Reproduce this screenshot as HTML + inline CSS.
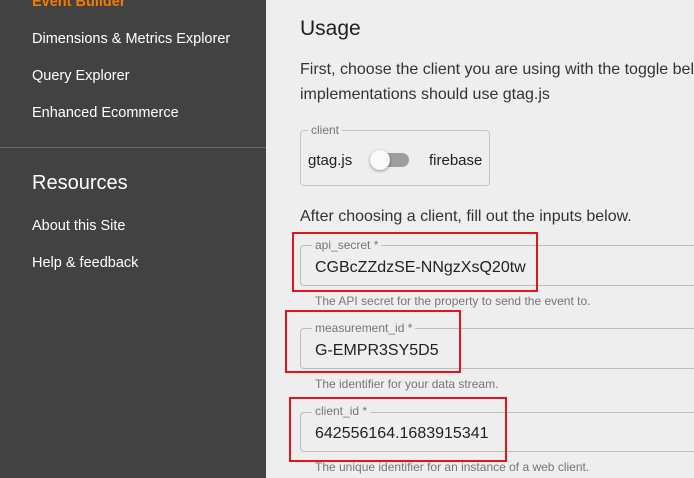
<!DOCTYPE html>
<html><head><style>
*{margin:0;padding:0;box-sizing:border-box}
html,body{width:694px;height:478px;overflow:hidden}
body{background:#eeeeee;font-family:"Liberation Sans",sans-serif;position:relative}
.wrap{position:absolute;left:0;top:0;width:694px;height:478px;overflow:hidden}
.side{position:absolute;left:0;top:0;width:266px;height:478px;background:#424242;color:#fff}
.side div{position:absolute;left:32px;font-size:14.5px;white-space:nowrap}
.a{position:absolute;white-space:nowrap}
.box{position:absolute;border:1px solid #bdbdbd;border-radius:4px;border-right:none;border-top-right-radius:0;border-bottom-right-radius:0}
.lbl{position:absolute;background:#eeeeee;color:#757575;font-size:12px;padding:0 3px;line-height:12px}
.val{position:absolute;font-size:16px;color:#212121}
.help{position:absolute;font-size:12px;color:#757575;white-space:nowrap}
.red{position:absolute;border:2px solid #e3141c}
</style></head><body><div class="wrap">
<div class="side">
<div style="top:-6px;color:#f57c00;font-weight:bold">Event Builder</div>
<div style="top:31px">Dimensions &amp; Metrics Explorer</div>
<div style="top:68px">Query Explorer</div>
<div style="top:105px">Enhanced Ecommerce</div>
<div style="top:147px;left:0;width:266px;height:1px;background:#6a6a6a"></div>
<div style="top:172px;font-size:20px">Resources</div>
<div style="top:218px">About this Site</div>
<div style="top:255px">Help &amp; feedback</div>
</div>
<div class="a" style="left:300px;top:17px;font-size:21px;color:#212121">Usage</div>
<div class="a" style="left:300px;top:57px;font-size:16px;color:#333;line-height:25px;width:394px;overflow:hidden">First, choose the client you are using with the toggle below. Non-mobile<br>implementations should use gtag.js</div>
<div style="position:absolute;left:300px;top:130px;width:190px;height:56px;border:1px solid #c4c4c4;border-radius:4px"></div>
<div class="lbl" style="left:308px;top:124px">client</div>
<div class="a" style="left:308px;top:152px;font-size:15px;color:#212121">gtag.js</div>
<div style="position:absolute;left:371px;top:153px;width:38px;height:14px;border-radius:7px;background:#9e9e9e"></div>
<div style="position:absolute;left:370px;top:150px;width:20px;height:20px;border-radius:10px;background:#fafafa;box-shadow:0 1px 3px rgba(0,0,0,.4)"></div>
<div class="a" style="left:429px;top:152px;font-size:15px;color:#212121">firebase</div>
<div class="a" style="left:300px;top:208px;font-size:16px;color:#333">After choosing a client, fill out the inputs below.</div>

<div class="box" style="left:300px;top:245px;width:394px;height:41px"></div>
<div class="lbl" style="left:312px;top:239px">api_secret *</div>
<div class="val" style="left:315px;top:259px">CGBcZZdzSE-NNgzXsQ20tw</div>
<div class="help" style="left:315px;top:294px">The API secret for the property to send the event to.</div>
<div class="red" style="left:292px;top:232px;width:246px;height:60px"></div>

<div class="box" style="left:300px;top:328px;width:394px;height:41px"></div>
<div class="lbl" style="left:312px;top:322px">measurement_id *</div>
<div class="val" style="left:315px;top:342px">G-EMPR3SY5D5</div>
<div class="help" style="left:315px;top:377px">The identifier for your data stream.</div>
<div class="red" style="left:285px;top:310px;width:176px;height:63px"></div>

<div class="box" style="left:300px;top:412px;width:394px;height:40px"></div>
<div class="lbl" style="left:312px;top:405px">client_id *</div>
<div class="val" style="left:315px;top:425px">642556164.1683915341</div>
<div class="help" style="left:315px;top:460px">The unique identifier for an instance of a web client.</div>
<div class="red" style="left:289px;top:397px;width:218px;height:65px"></div>
</div></body></html>
